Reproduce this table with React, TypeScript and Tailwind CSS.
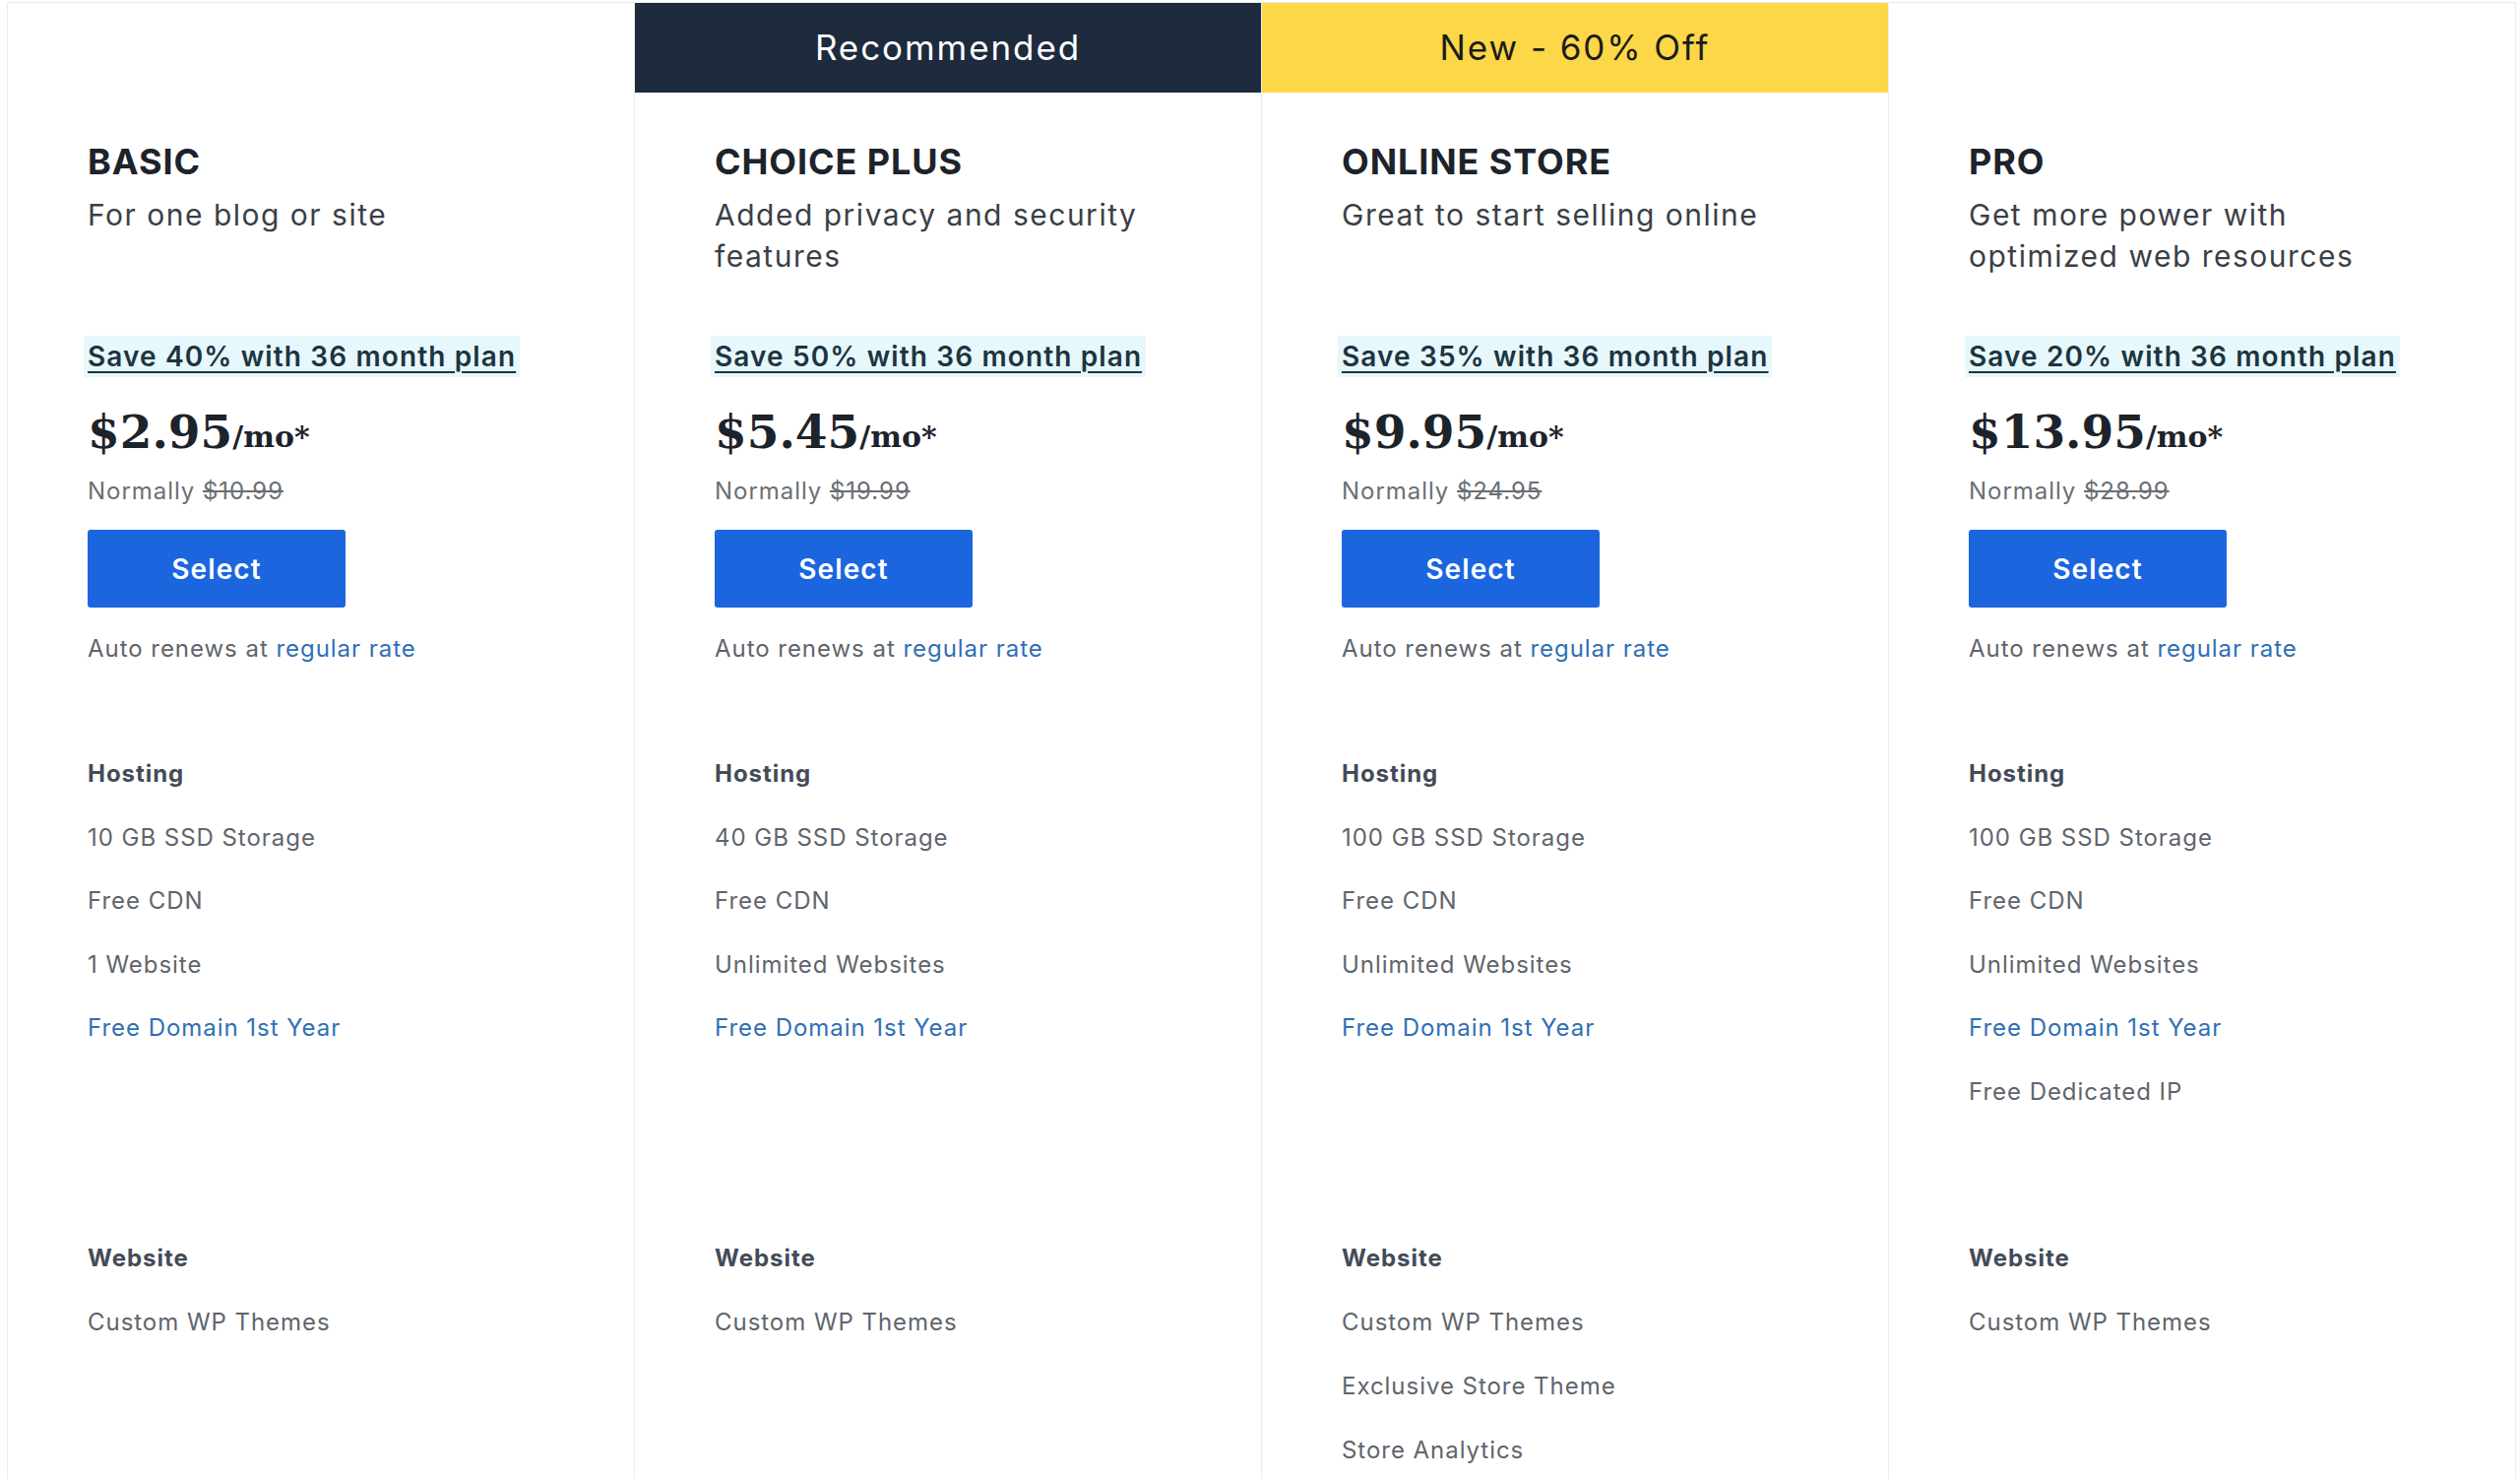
type Plan = {
  name: string;
  blurb: string;
  save: string;
  price: string;
  normal: string;
  hosting: { label: string; link?: boolean }[];
  website: string[];
  badge?: "dark" | "yellow";
  badgeText?: string;
};

const plans: Plan[] = [
  {
    name: "BASIC",
    blurb: "For one blog or site",
    save: "Save 40% with 36 month plan",
    price: "$2.95",
    normal: "$10.99",
    hosting: [
      { label: "10 GB SSD Storage" },
      { label: "Free CDN" },
      { label: "1 Website" },
      { label: "Free Domain 1st Year", link: true },
    ],
    website: ["Custom WP Themes"],
  },
  {
    name: "CHOICE PLUS",
    blurb: "Added privacy and security features",
    save: "Save 50% with 36 month plan",
    price: "$5.45",
    normal: "$19.99",
    hosting: [
      { label: "40 GB SSD Storage" },
      { label: "Free CDN" },
      { label: "Unlimited Websites" },
      { label: "Free Domain 1st Year", link: true },
    ],
    website: ["Custom WP Themes"],
    badge: "dark",
    badgeText: "Recommended",
  },
  {
    name: "ONLINE STORE",
    blurb: "Great to start selling online",
    save: "Save 35% with 36 month plan",
    price: "$9.95",
    normal: "$24.95",
    hosting: [
      { label: "100 GB SSD Storage" },
      { label: "Free CDN" },
      { label: "Unlimited Websites" },
      { label: "Free Domain 1st Year", link: true },
    ],
    website: ["Custom WP Themes", "Exclusive Store Theme", "Store Analytics"],
    badge: "yellow",
    badgeText: "New - 60% Off",
  },
  {
    name: "PRO",
    blurb: "Get more power with optimized web resources",
    save: "Save 20% with 36 month plan",
    price: "$13.95",
    normal: "$28.99",
    hosting: [
      { label: "100 GB SSD Storage" },
      { label: "Free CDN" },
      { label: "Unlimited Websites" },
      { label: "Free Domain 1st Year", link: true },
      { label: "Free Dedicated IP" },
    ],
    website: ["Custom WP Themes"],
  },
];

// shared style for the small feature lines
const line = "text-[24px] leading-[32px] tracking-[0.04em]";

function PlanColumn({ plan }: { plan: Plan }) {
  return (
    <div className="flex flex-col border-r border-[#ebebeb]">
      {plan.badge === "dark" ? (
        <div className="h-[91px] bg-[#1e2a3d] text-white flex items-center justify-center text-[35px] tracking-[0.055em]">
          {plan.badgeText}
        </div>
      ) : plan.badge === "yellow" ? (
        <div className="h-[91px] bg-[#fcd747] text-[#1b1b1b] flex items-center justify-center text-[35px] tracking-[0.055em]">
          {plan.badgeText}
        </div>
      ) : (
        <div className="h-[91px]" />
      )}

      <div className="pl-[81px] pr-[60px] flex flex-col items-start">
        <h2 className="mt-[50px] text-[36px] leading-[40px] font-bold tracking-[0.025em] text-[#1d232b]">{plan.name}</h2>
        <p className="mt-[13px] h-[84px] text-[30px] leading-[42px] tracking-[0.05em] text-[#3b3f46] max-w-[450px]">
          {plan.blurb}
        </p>

        <a className="mt-[60px] h-[42px] leading-[42px] px-[4px] -ml-[4px] bg-[#e6f8fb] text-[28px] font-semibold tracking-[0.04em] text-[#1d3440] underline underline-offset-[5px] decoration-[2px]">
          {plan.save}
        </a>

        <div className="mt-[28px] h-[56px] flex items-end font-['DejaVu_Serif',serif] font-bold text-[#1d232b]">
          <span className="text-[47px] leading-[56px]">{plan.price}</span>
          <span className="text-[30px] leading-[46px]">/mo*</span>
        </div>

        <p className={`mt-[16px] ${line} text-[#6b6f75]`}>
          Normally <span className="line-through">{plan.normal}</span>
        </p>

        <button className="mt-[23px] h-[79px] w-[262px] rounded-[3px] bg-[#1b66de] text-white text-[28px] font-semibold tracking-[0.04em]">
          Select
        </button>

        <p className={`mt-[26px] ${line} text-[#5f646b]`}>
          Auto renews at <span className="text-[#2f6fb5]">regular rate</span>
        </p>

        <div className="mt-[95px] h-[492px] flex flex-col gap-[32.5px]">
          <h3 className={`${line} font-bold text-[#434b58]`}>Hosting</h3>
          {plan.hosting.map((h) => (
            <p key={h.label} className={h.link ? `${line} text-[#2f6fb5]` : `${line} text-[#60656c]`}>
              {h.label}
            </p>
          ))}
        </div>

        <div className="flex flex-col gap-[33px] pb-[40px]">
          <h3 className={`${line} font-bold text-[#434b58]`}>Website</h3>
          {plan.website.map((w) => (
            <p key={w} className={`${line} text-[#60656c]`}>
              {w}
            </p>
          ))}
        </div>
      </div>
    </div>
  );
}

export default function App() {
  return (
    <div className="h-[1502px] overflow-hidden bg-white pl-[7px] pr-[4px] pt-[2px] font-['Inter',sans-serif]">
      <div className="grid grid-cols-4 border-t border-l border-[#ebebeb] min-h-[1500px]">
        {plans.map((p) => (
          <PlanColumn key={p.name} plan={p} />
        ))}
      </div>
    </div>
  );
}
